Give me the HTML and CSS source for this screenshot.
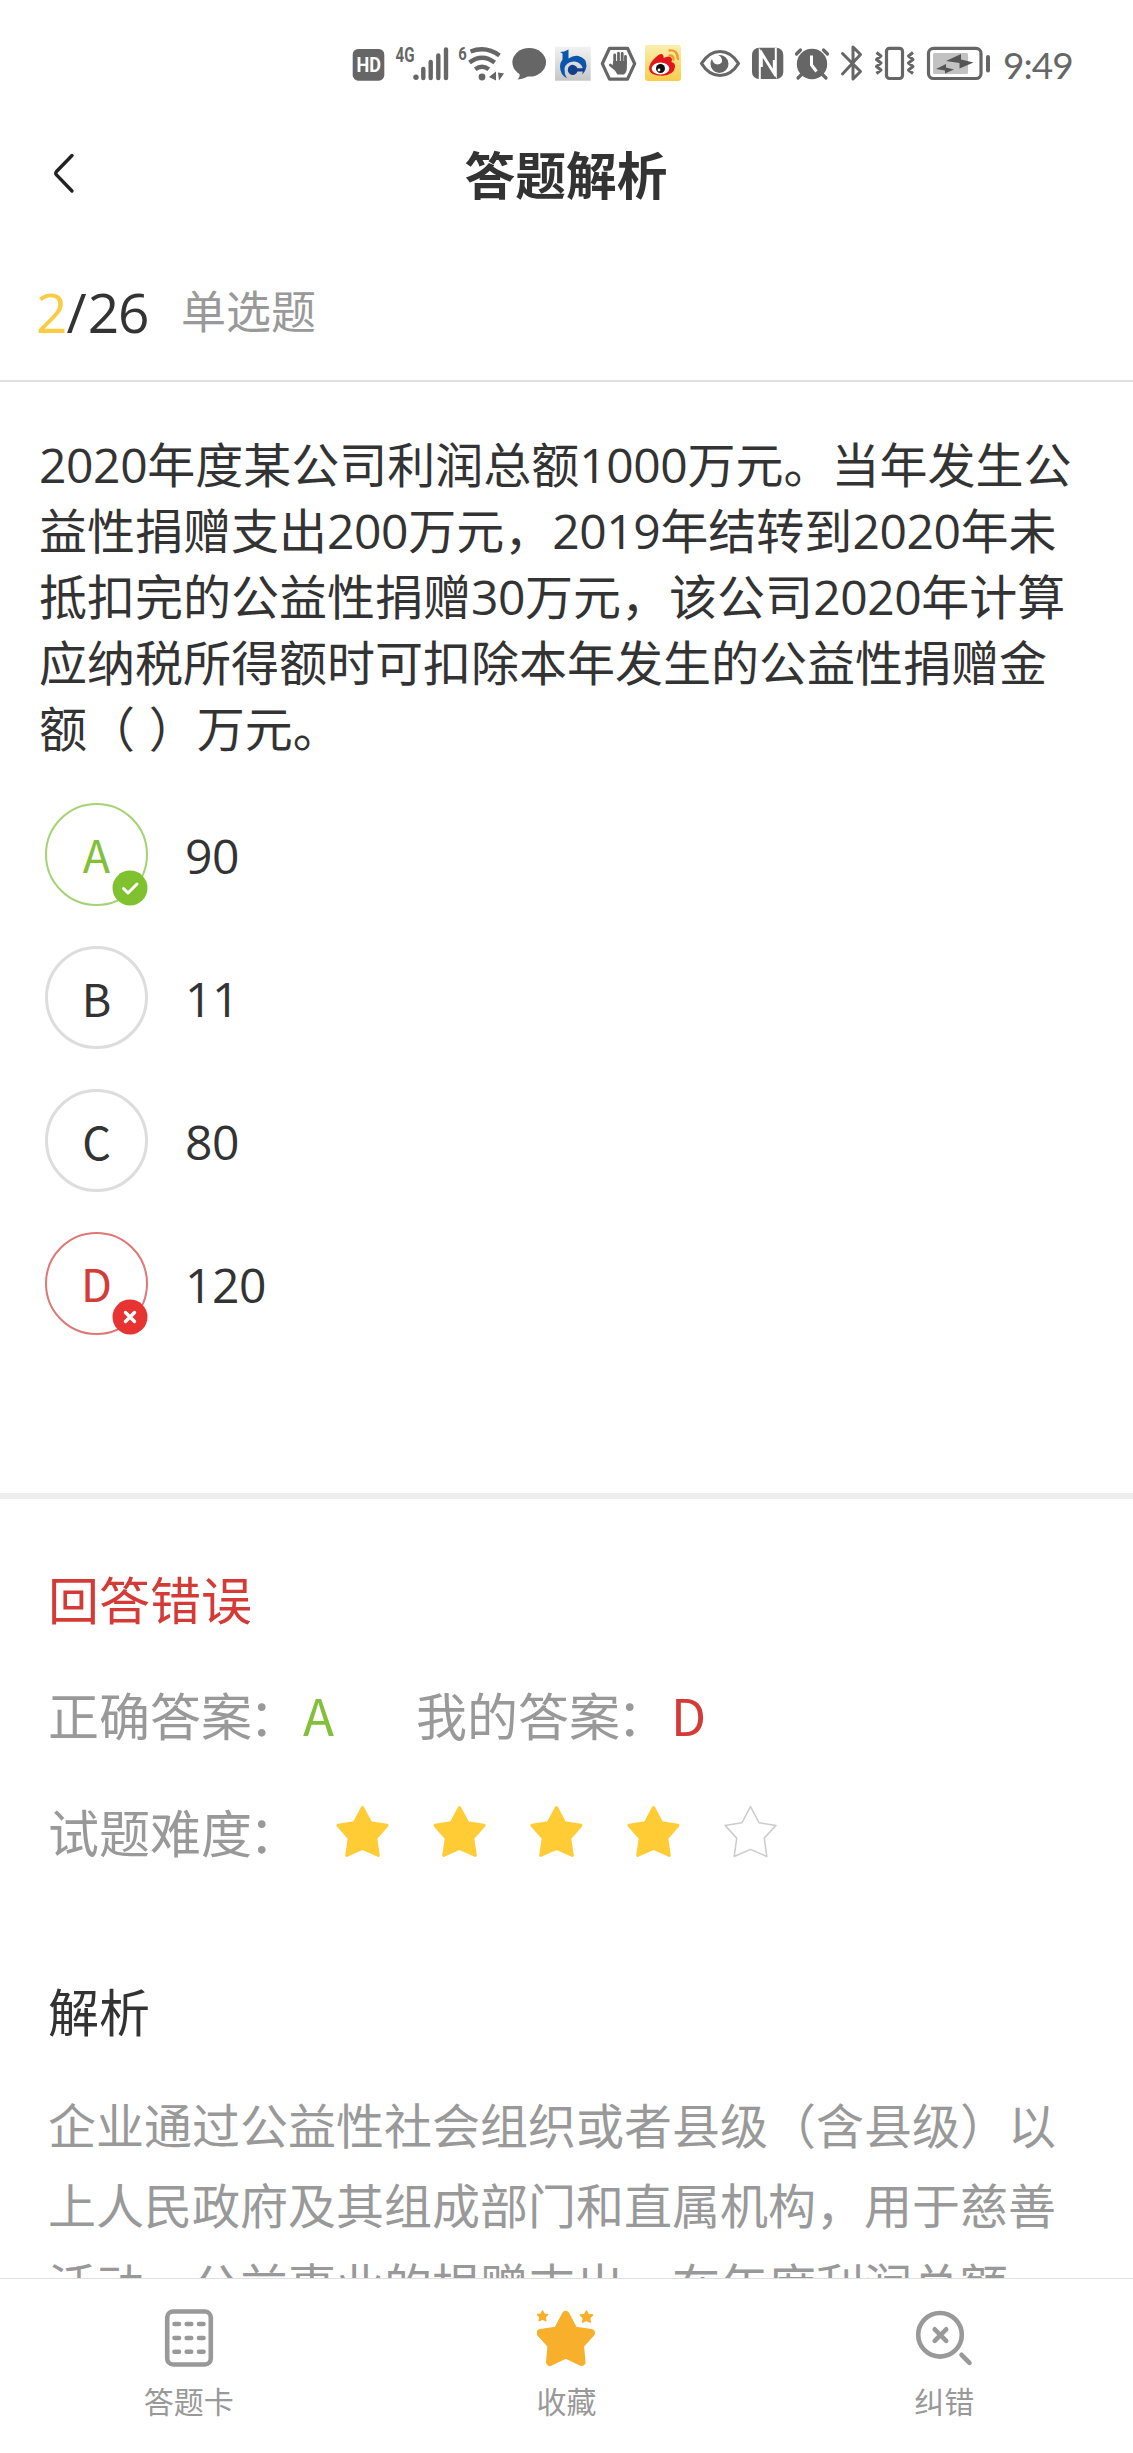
FILE: index.html
```html
<!DOCTYPE html>
<html lang="zh-CN">
<head>
  <meta charset="UTF-8" />
  <meta name="viewport" content="width=device-width, initial-scale=1.0" />
  <title>答题解析</title>
  <link rel="stylesheet" href="styles.css">
</head>
<body>

  <!-- Status bar -->
  <div class="status-bar">
    <svg width="42" height="46" viewBox="350 40 42 46">
      <rect x="352.7" y="49" width="31.6" height="31.7" rx="5.5" fill="#666"/>
      <text x="356.5" y="72" font-size="21" font-weight="bold" fill="#fff" textLength="24.5" lengthAdjust="spacingAndGlyphs">HD</text>
    </svg>
    <svg width="60" height="46" viewBox="392 40 60 46" fill="#666">
      <text x="395.5" y="61.7" font-size="19.5" font-weight="bold" textLength="19" lengthAdjust="spacingAndGlyphs">4G</text>
      <circle cx="416" cy="77.3" r="2.7"/>
      <path d="M423.3 69v9M430.7 62v16M438.3 55.5v22.5M446 49.5v28.5" stroke="#666" stroke-width="4.4" stroke-linecap="round"/>
    </svg>
    <svg width="54" height="46" viewBox="456 40 54 46" class="wifi">
      <text x="458.3" y="60.4" font-size="19" font-weight="bold" fill="#666" textLength="8.5" lengthAdjust="spacingAndGlyphs">6</text>
      <path d="M470.5 51.5Q486 45.500 499.500 55.500M469.500 62.500Q482 53 494.700 62.500M475.200 69.300Q482 64.200 488.800 69.300" fill="none" stroke="#666" stroke-width="4.300"/>
      <circle cx="482" cy="77" r="3.4" fill="#666"/>
      <path d="M496 71.500v9l-7-3.500zM498 72.500l6 1-5 7z" fill="#666"/>
    </svg>
    <svg width="40" height="46" viewBox="510 40 40 46" fill="#666">
      <ellipse cx="529.2" cy="62.3" rx="16.8" ry="14.3"/>
      <path d="M519 71q2 5-1.500 8.500q8-.5 12-5z"/>
    </svg>
    <svg width="48" height="46" viewBox="550 40 48 46">
      <defs>
        <linearGradient id="silver" x1="0" y1="0" x2="0" y2="1">
          <stop offset="0" stop-color="#f2f2f2"/><stop offset="1" stop-color="#c6c6c6"/>
        </linearGradient>
      </defs>
      <rect x="555" y="46.700" width="35.700" height="34" fill="url(#silver)"/>
      <path d="M560 52q4 0 8.500-2.500v9q5-3.500 10-2.500 8 2 8 10-1 6-4.500 8.500 2-5-.5-9-3-4-8-4-8 1-9 7-.500 5 2.500 10-7-4-7-12 0-4 2.500-7v-6z" fill="#0b56ad"/>
      <path d="M584 71.500h-6.500a5 5 0 1 1 0-3.200h7z" fill="#12408c"/>
    </svg>
    <svg width="44" height="46" viewBox="598 40 44 46">
      <path d="M609.500 48.300h18l7.200 15.400-7.200 15.500h-18l-7.200-15.500z" fill="none" stroke="#666" stroke-width="3.200" stroke-linejoin="round"/>
      <path d="M614.700 63v-8M618.500 63v-9.800M622.200 63v-9.500M625.500 64v-7.500M610.300 65l5 4" stroke="#666" stroke-width="2.800" stroke-linecap="round"/>
      <path d="M613.300 61h13.600v7q0 4-3 6.500h-6.500l-5-8z" fill="#666"/>
    </svg>
    <svg width="54" height="46" viewBox="642 40 54 46">
      <defs>
        <linearGradient id="gold" x1="0" y1="0" x2="0" y2="1">
          <stop offset="0" stop-color="#fbeeb0"/><stop offset="1" stop-color="#f7cd4a"/>
        </linearGradient>
      </defs>
      <rect x="645" y="45" width="36" height="36" rx="3" fill="url(#gold)"/>
      <path d="M649 69q0-6 7-12 5-5 7-2 1 1 .5 3 6-3 8 0 1 1 0 4 4 1 3.500 5-1 8-13 8.700-12 0-13-6.700z" fill="#e1161c"/>
      <ellipse cx="660.500" cy="68.500" rx="8.800" ry="6" fill="#fff"/>
      <circle cx="660.500" cy="68.500" r="4.500" fill="#111"/>
      <circle cx="659" cy="70" r="1.400" fill="#fff"/>
      <path d="M669.500 50.500q8-1 8.500 8.500M669.500 55.500q4-.5 4 4" fill="none" stroke="#f09c2c" stroke-width="2.400" stroke-linecap="round"/>
    </svg>
    <svg width="50" height="46" viewBox="696 40 50 46">
      <path d="M701.500 63.500Q709 51.500 720 51.500T738.500 63.500Q731 75.500 720 75.500T701.500 63.500z" fill="#fff" stroke="#666" stroke-width="3.200" stroke-linejoin="round"/>
      <path d="M718.500 55a9 9 0 1 1-8 8.500q0-3 1.500-4.500 1 5 5.500 5.500 5-.5 4.500-5-.5-3-3.500-4.500z" fill="#666"/>
    </svg>
    <svg width="42" height="46" viewBox="746 40 42 46">
      <rect x="752" y="47.700" width="31.300" height="31.300" rx="7" fill="#666"/>
      <path d="M759.800 79V51l14 22.500V60M775.800 48v27.500l-14-23V67" fill="none" stroke="#fff" stroke-width="2"/>
    </svg>
    <svg width="48" height="46" viewBox="788 40 48 46">
      <circle cx="812" cy="64" r="15.200" fill="#666"/>
      <path d="M796.500 54l4-4M827.500 54l-4-4M798 78l4-4M826 78l-4-4" stroke="#666" stroke-width="3.200" stroke-linecap="round"/>
      <path d="M811.500 55.500v9.500l5 6.500" fill="none" stroke="#fff" stroke-width="3"/>
    </svg>
    <svg width="34" height="46" viewBox="836 40 34 46">
      <path d="M842.500 53.500l18 18-7.500 7.500V47l7.500 7.500-18 19.500" fill="none" stroke="#666" stroke-width="3" stroke-linejoin="round" stroke-linecap="round"/>
    </svg>
    <svg width="52" height="46" viewBox="870 40 52 46" fill="none" stroke="#666" stroke-linejoin="round">
      <rect x="886.500" y="48.300" width="16" height="30.200" rx="3" stroke-width="3.200"/>
      <path d="M876.500 52.500l4.500 3.500-4.500 3.500 4.500 3.500-4.500 3.500 4.500 3.500-4.500 3.500M913 52.500l-4.500 3.500 4.500 3.500-4.500 3.500 4.500 3.500-4.500 3.500 4.500 3.500" stroke-width="3"/>
    </svg>
    <svg width="74" height="46" viewBox="922 40 74 46">
      <rect x="928.500" y="48.300" width="52.500" height="30.200" rx="5" fill="#fff" stroke="#666" stroke-width="3.200"/>
      <rect x="933" y="53" width="35" height="21" rx="1.500" fill="#c2c2c2"/>
      <rect x="986" y="55" width="4" height="17.500" rx="2" fill="#666"/>
      <path d="M946 61l15-7v5.500l12.500 3-14 6v-5.500zM936 69l10-5v3.500l8 2-9 4v-3z" fill="#555"/>
    </svg>
    <span class="clock">9:49</span>
  </div>

  <!-- Header -->
  <header class="top-nav">
    <svg class="back" width="26" height="44" viewBox="0 0 26 44">
      <path d="M21 4.500L5.500 20.500q-1.500 1.700 0 3.400L21 40" fill="none" stroke="#222" stroke-width="3.400" stroke-linecap="round"/>
    </svg>
    <h1>答题解析</h1>
  </header>

  <main>
    <div class="progress">
      <div class="count"><span class="current">2</span><span class="slash">/</span>26</div>
      <div class="type">单选题</div>
    </div>

    <!-- Question -->
    <section class="question">
      <p class="stem"><span class="num">2020</span>年度某公司利润总额<span class="num">1000</span>万元。当年发生公益性捐赠支出<span class="num">200</span>万元，<span class="num">2019</span>年结转到<span class="num">2020</span>年未抵扣完的公益性捐赠<span class="num">30</span>万元，该公司<span class="num">2020</span>年计算应纳税所得额时可扣除本年发生的公益性捐赠金额（ ）万元。</p>

      <ul class="options">
        <li class="option right">
          <div class="letter">A
            <svg class="mark" width="36" height="36" viewBox="0 0 36 36">
              <circle cx="18" cy="18" r="17.500" fill="#7fc12e"/>
              <path d="M11.500 18.500l4.500 4.500 9-9" fill="none" stroke="#fff" stroke-width="3" stroke-linecap="round" stroke-linejoin="round"/>
            </svg>
          </div>
          <span class="num">90</span>
        </li>
        <li class="option">
          <div class="letter">B</div>
          <span class="num">11</span>
        </li>
        <li class="option">
          <div class="letter">C</div>
          <span class="num">80</span>
        </li>
        <li class="option wrong">
          <div class="letter">D
            <svg class="mark" width="36" height="36" viewBox="0 0 36 36">
              <circle cx="18" cy="18" r="17.500" fill="#e83333"/>
              <path d="M13.500 13.500l9 9M22.500 13.500l-9 9" stroke="#fff" stroke-width="3.400" stroke-linecap="round"/>
            </svg>
          </div>
          <span class="num">120</span>
        </li>
      </ul>
    </section>

    <!-- Result and explanation -->
    <section class="analysis">
      <h2 class="result">回答错误</h2>
      <div class="row answers">
        <div>正确答案<span class="colon">：</span><span class="green">A</span></div>
        <div>我的答案<span class="colon">：</span><span class="red">D</span></div>
      </div>
      <div class="row level">
        <div>试题难度<span class="colon">：</span></div>
        <div class="stars">
          <svg class="star" viewBox="0 0 52 52"><path d="M26 2.500L34 17.500 50 20 39 32.500 41.500 49.500 26 42.500 10.500 49.500 13 32.500 2 20 18 17.500z"/></svg>
          <svg class="star" viewBox="0 0 52 52"><path d="M26 2.500L34 17.500 50 20 39 32.500 41.500 49.500 26 42.500 10.500 49.500 13 32.500 2 20 18 17.500z"/></svg>
          <svg class="star" viewBox="0 0 52 52"><path d="M26 2.500L34 17.500 50 20 39 32.500 41.500 49.500 26 42.500 10.500 49.500 13 32.500 2 20 18 17.500z"/></svg>
          <svg class="star" viewBox="0 0 52 52"><path d="M26 2.500L34 17.500 50 20 39 32.500 41.500 49.500 26 42.500 10.500 49.500 13 32.500 2 20 18 17.500z"/></svg>
          <svg class="star empty" viewBox="0 0 52 52"><path d="M26 1.500L34.500 17.500 51 20 39.500 32.500 42 50.500 26 43.500 10 50.500 12.500 32.500 1 20 17.500 17.500z"/></svg>
        </div>
      </div>
      <h3>解析</h3>
      <p class="explain">企业通过公益性社会组织或者县级（含县级）以上人民政府及其组成部门和直属机构，用于慈善活动、公益事业的捐赠支出，在年度利润总额</p>
    </section>
  </main>

  <!-- Bottom tabs -->
  <nav class="tab-bar">
    <a class="tab">
      <svg width="50" height="58" viewBox="0 0 50 58" fill="none" stroke="#999">
        <rect x="3.200" y="2.500" width="43.600" height="53" rx="6" stroke-width="4.600"/>
        <path d="M10.500 15h4.500M22.700 15h4.500M35 15h4.500M10.500 29h4.500M22.700 29h4.500M35 29h4.500M10.500 42.700h4.500M22.700 42.700h4.500M35 42.700h4.500" stroke-width="4.600" stroke-linecap="round"/>
      </svg>
      <span>答题卡</span>
    </a>
    <a class="tab">
      <svg width="60" height="58" viewBox="1.500 0 60 58" fill="#f8b02c" stroke="#f8b02c" stroke-linejoin="round">
        <path d="M30.300 6L38.500 21.500 55.500 24 44.500 36 46 53 30.300 45.500 14.500 53 16 36 5 24 22 21.500z" stroke-width="8"/>
        <path d="M7 2l1.600 3.200 3.600.3-2.600 2.500.7 3.700-3.300-1.600-3.300 1.600.7-3.700-2.600-2.500 3.600-.3zM51 2l1.900 3.600 4.200.4-3 2.900.8 4.200-3.900-1.800-3.900 1.800.8-4.200-3-2.900 4.200-.4z" stroke-width="1.500"/>
      </svg>
      <span>收藏</span>
    </a>
    <a class="tab">
      <svg width="58" height="58" viewBox="0 0 58 58" fill="none" stroke="#999" stroke-linecap="round">
        <circle cx="25" cy="25.800" r="21.800" stroke-width="4.600"/>
        <path d="M19.700 20.300l11.500 11.500M31.200 20.300L19.700 31.800M46.500 45.800l8 8" stroke-width="4.600"/>
      </svg>
      <span>纠错</span>
    </a>
  </nav>

</body>
</html>
```

FILE: styles.css
```css
* {
  margin: 0;
  padding: 0;
  box-sizing: border-box;
}

body {
  width: 1133px;
  height: 2453px;
  display: flex;
  flex-direction: column;
  overflow: hidden;
  background: #fff;
  color: #333;
  font-family: 'Noto Sans CJK SC', sans-serif;
}

/* ========== Status bar ========== */
.status-bar {
  display: flex;
  flex: none;
  height: 86px;
  padding: 40px 0 0 350px;
  font-family: Roboto, sans-serif;
}

.status-bar svg {
  flex: none;
}

.status-bar .wifi {
  margin-left: 4px;
}

.clock {
  margin-left: 7px;
  font-family: Lato, sans-serif;
  font-size: 37px;
  line-height: 49px;
  letter-spacing: -1px;
  color: #666;
}

/* ========== Header ========== */
.top-nav {
  display: flex;
  flex: none;
  align-items: center;
  height: 173px;
  padding: 0 51px;
}

.top-nav h1 {
  flex: 1;
  margin-right: 27px;
  text-align: center;
  font-size: 50.7px;
  line-height: 60px;
}

main {
  flex: 1;
  min-height: 0;
  overflow: hidden;
}

.progress {
  display: flex;
  align-items: center;
  height: 123px;
  padding: 0 36px 20px;
  border-bottom: 2px solid #e0e0e0;
}

.count {
  width: 145px;
  padding-top: 5px;
  font-family: 'Open Sans', sans-serif;
  font-size: 55px;
  line-height: 60px;
  letter-spacing: -1px;
}

.current {
  color: #facc46;
}

.slash {
  letter-spacing: 1px;
}

.type {
  font-size: 45px;
  line-height: 60px;
  color: #999;
}

/* ========== Question ========== */
.question {
  padding: 47px 45px 159px 39px;
  border-bottom: 6px solid #eee;
}

.stem {
  font-size: 48px;
  line-height: 66px;
  word-spacing: 3px;
}

.num {
  font-family: 'Open Sans', sans-serif;
  font-size: 48px;
  line-height: 1;
  letter-spacing: -0.4px;
}

.options {
  display: flex;
  flex-direction: column;
  gap: 41px;
  margin-top: 44px;
  padding-left: 6px;
  list-style: none;
}

.option {
  display: flex;
  align-items: center;
  height: 102px;
}

.option .num {
  margin-left: 37px;
  padding-top: 3px;
}

.letter {
  position: relative;
  width: 103px;
  height: 103px;
  border: 3px solid #ddd;
  border-radius: 50%;
  text-align: center;
  font-size: 45px;
  line-height: 97px;
}

.right .letter {
  border: 2px solid #a5d272;
  color: #82c03a;
}

.wrong .letter {
  border: 2px solid #df7775;
  color: #d43c38;
}

.mark {
  position: absolute;
  right: -2px;
  bottom: -2px;
}

/* ========== Analysis ========== */
.analysis {
  padding: 69px 45px 0 48px;
}

.result {
  font-size: 51px;
  font-weight: 400;
  line-height: 60px;
  color: #d43a36;
}

.row {
  display: flex;
  align-items: center;
  height: 60px;
  font-size: 51px;
  line-height: 60px;
  color: #999;
}

.colon {
  margin: 0 3px 0 -3px;
}

.answers {
  gap: 82px;
  margin-top: 56px;
}

.green {
  color: #82c03a;
}

.red {
  color: #d43a36;
}

.level {
  margin-top: 57px;
}

.stars {
  display: flex;
  gap: 44px;
  margin-left: 33px;
}

.star {
  width: 53px;
  height: 53px;
  fill: #ffcc36;
  stroke: #ffcc36;
  stroke-width: 3;
  stroke-linejoin: round;
}

.star.empty {
  fill: #fff;
  stroke: #ccc;
  stroke-width: 1.5;
}

.analysis h3 {
  margin-top: 119px;
  font-size: 51px;
  font-weight: 400;
  line-height: 60px;
}

.explain {
  margin-top: 43px;
  font-size: 48px;
  line-height: 80px;
  color: #999;
}

/* ========== Tab bar ========== */
.tab-bar {
  display: flex;
  flex: none;
  height: 175px;
  padding-top: 30px;
  border-top: 1px solid #e0e0e0;
  background: #fff;
}

.tab {
  display: flex;
  flex: 1;
  flex-direction: column;
  align-items: center;
  gap: 13px;
  font-size: 30px;
  line-height: 40px;
  color: #999;
}
```
